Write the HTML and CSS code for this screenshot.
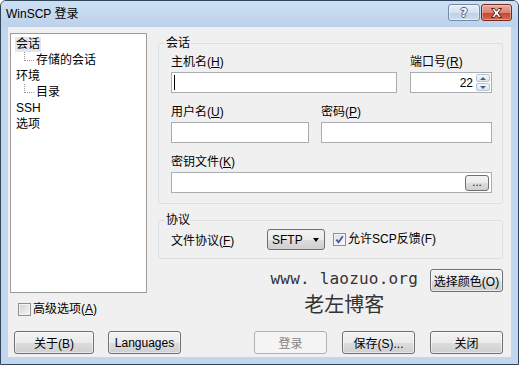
FILE: index.html
```html
<!DOCTYPE html>
<html>
<head>
<meta charset="utf-8">
<title>WinSCP 登录</title>
<link rel="stylesheet" href="styles.css">
</head>
<body>
<div class="window">
  <div class="titlebar">
    <span class="title">WinSCP 登录</span>
    <div class="caps">
      <div class="cap help"><span class="qmark">?</span></div>
      <div class="cap close">
        <svg width="13" height="10" viewBox="0 0 13 10"><path d="M1.5 0.5H4.3L6.5 3.2L8.7 0.5H11.5L8.2 5L11.5 9.5H8.7L6.5 6.8L4.3 9.5H1.5L4.8 5Z" fill="#fff" stroke="#4b2620" stroke-width="1" stroke-linejoin="round"/></svg>
      </div>
    </div>
  </div>
  <div class="client">
    <div class="main">
      <div class="leftcol">
        <div class="tree">
          <div class="node"><span class="sel">会话</span></div>
          <div class="node"><span class="conn"></span>存储的会话</div>
          <div class="node">环境</div>
          <div class="node"><span class="conn"></span>目录</div>
          <div class="node">SSH</div>
          <div class="node">选项</div>
        </div>
        <div class="check adv"><span class="box"></span><span>高级选项(<u>A</u>)</span></div>
      </div>
      <div class="rightcol">
        <fieldset class="group session">
          <legend>会话</legend>
          <div class="gbody sbody">
            <div class="row r1">
              <div class="field host">
                <div class="lbl">主机名(<u>H</u>)</div>
                <div class="input"><span class="caret"></span></div>
              </div>
              <div class="field port">
                <div class="lbl">端口号(<u>R</u>)</div>
                <div class="input num"><span>22</span>
                  <div class="spin"><div class="sb"><span class="up"></span></div><div class="sb"><span class="down"></span></div></div>
                </div>
              </div>
            </div>
            <div class="row r2">
              <div class="field user">
                <div class="lbl">用户名(<u>U</u>)</div>
                <div class="input"></div>
              </div>
              <div class="field pass">
                <div class="lbl">密码(<u>P</u>)</div>
                <div class="input"></div>
              </div>
            </div>
            <div class="row r3">
              <div class="field key">
                <div class="lbl">密钥文件(<u>K</u>)</div>
                <div class="input keyin"><div class="dots">...</div></div>
              </div>
            </div>
          </div>
        </fieldset>
        <fieldset class="group proto">
          <legend>协议</legend>
          <div class="gbody pbody">
            <span class="plbl">文件协议(<u>F</u>)</span>
            <div class="select"><span>SFTP</span><span class="arrow"></span></div>
            <div class="check scp"><span class="box checked"><svg width="9" height="9" viewBox="0 0 9 9"><path d="M1.3 4.6L3.6 7.2L7.8 1.3" fill="none" stroke="#4657a0" stroke-width="1.8"/></svg></span><span>允许SCP反馈(F)</span></div>
          </div>
        </fieldset>
        <div class="extra">
          <div class="watermark">
            <div class="wm1">www. laozuo.org</div>
            <div class="wm2">老左博客</div>
          </div>
          <div class="btn color">选择颜色(O)</div>
        </div>
      </div>
    </div>
    <div class="buttons">
      <div class="btn about">关于(B)</div>
      <div class="btn lang">Languages</div>
      <div class="btn login disabled">登录</div>
      <div class="btn save">保存(S)...</div>
      <div class="btn closeb">关闭</div>
    </div>
  </div>
</div>
</body>
</html>
```
FILE: styles.css
```css
* { box-sizing: border-box; }
html, body { margin: 0; padding: 0; background: #fff; }
body {
  font-family: "Liberation Sans", "Noto Sans CJK SC", sans-serif;
  font-size: 12px;
  color: #000;
}
u { text-decoration: underline; text-underline-offset: 1px; }

.window {
  width: 519px;
  height: 365px;
  border: 1px solid #33455b;
  border-radius: 6px 6px 0 0;
  background: #c2d6ee;
  display: flex;
  flex-direction: column;
  overflow: hidden;
}
.titlebar {
  height: 26px;
  flex: none;
  display: flex;
  justify-content: space-between;
  align-items: flex-start;
  padding: 0 6px 0 5px;
  background: linear-gradient(#cde0f3, #bcd2eb);
}
.title { line-height: 26px; font-size: 12px; }
.caps { display: flex; gap: 1px; margin-top: 3px; }
.cap {
  height: 17px;
  border-radius: 3px;
  display: flex;
  align-items: center;
  justify-content: center;
}
.help {
  width: 32px;
  border: 1px solid #7189ab;
  background: linear-gradient(#e7eef8 0, #d5e1f0 50%, #bfcfe5 51%, #cddcee 100%);
  box-shadow: inset 0 0 0 1px rgba(255,255,255,.5);
}
.qmark {
  font-family: "DejaVu Sans", sans-serif;
  font-weight: bold;
  font-size: 12px;
  line-height: 14px;
  color: #fff;
  text-shadow: 1px 0 0 #4b5c74, -1px 0 0 #4b5c74, 0 1px 0 #4b5c74, 0 -1px 0 #4b5c74;
}
.close {
  width: 31px;
  border: 1px solid #6d2b22;
  background: linear-gradient(#eba99b 0, #dd8170 50%, #c8432f 51%, #d5694f 100%);
  box-shadow: inset 0 0 0 1px rgba(255,255,255,.35);
}
.close svg { display: block; }

.client {
  flex: 1;
  margin: 0 7px 7px;
  background: #f0f0f0;
  display: flex;
  flex-direction: column;
  padding: 6px 8px 3px 2px;
}
.main { display: flex; gap: 11px; }

.leftcol { width: 137px; display: flex; flex-direction: column; }
.tree {
  height: 260px;
  border: 1px solid #9c9c9c;
  background: #fff;
  padding: 2px 0 0 5px;
}
.node {
  display: flex;
  align-items: flex-start;
  height: 16px;
  line-height: 16px;
  white-space: nowrap;
}
.sel { background: #e6e6e6; padding: 0 1px; margin-left: -1px; line-height: 15px; margin-top: 1px; }
.conn {
  width: 10px;
  height: 9px;
  margin-left: 8px;
  margin-right: 2px;
  border-left: 1px dotted #9a9a9a;
  border-bottom: 1px dotted #9a9a9a;
  flex: none;
}

.check { display: flex; align-items: center; gap: 2px; line-height: 13px; }
.adv { margin: 10px 0 0 8px; }
.box {
  width: 13px;
  height: 13px;
  flex: none;
  border: 1px solid #8e8f8f;
  background: linear-gradient(135deg, #cfcfcf, #f8f8f8);
  box-shadow: inset 0 0 0 1px #f4f4f4;
  display: flex;
  align-items: center;
  justify-content: center;
}
.box.checked { background: linear-gradient(135deg, #dcdcdc, #fbfbfb); }
.box svg { display: block; }

.rightcol { width: 345px; display: flex; flex-direction: column; }
.group {
  margin: 0;
  padding: 0;
  min-width: 0;
  border: 1px solid #d5dfe5;
  border-radius: 3px;
}
.group legend {
  padding: 0 1px;
  margin-left: 6px;
  line-height: 16px;
  font-size: 12px;
}
.session { margin-top: 2px; }
.sbody { padding: 3px 10px 10px 12px; display: flex; flex-direction: column; gap: 11px; }
.row { display: flex; }
.r1 { gap: 13px; }
.r2 { gap: 12px; }
.field { display: flex; flex-direction: column; gap: 2px; }
.lbl { line-height: 16px; height: 16px; white-space: nowrap; }
.host { width: 226px; }
.port { width: 82px; }
.user { width: 138px; }
.pass { width: 171px; }
.key { width: 321px; }
.input {
  height: 21px;
  border: 1px solid #abadb3;
  background: #fff;
  display: flex;
  align-items: center;
}
.caret { width: 1px; height: 15px; background: #000; margin-left: 2px; }
.num { justify-content: flex-end; }
.num > span { line-height: 16px; }
.spin { display: flex; flex-direction: column; gap: 1px; margin: 0 1px 0 3px; }
.sb {
  width: 14px;
  height: 8px;
  border: 1px solid #b7c4d6;
  border-radius: 2px;
  background: linear-gradient(#f5f8fc, #dbe4ef);
  display: flex;
  align-items: center;
  justify-content: center;
}
.up { width: 0; height: 0; border-left: 3px solid transparent; border-right: 3px solid transparent; border-bottom: 3px solid #4b5e80; }
.down { width: 0; height: 0; border-left: 3px solid transparent; border-right: 3px solid transparent; border-top: 3px solid #4b5e80; }
.keyin { justify-content: flex-end; }
.dots {
  width: 24px;
  height: 16px;
  margin-right: 2px;
  border: 1px solid #707070;
  border-radius: 3px;
  background: linear-gradient(#f2f2f2 0, #ebebeb 50%, #dddddd 51%, #cfcfcf 100%);
  font-size: 10px;
  line-height: 14px;
  text-align: center;
  font-family: "DejaVu Sans", sans-serif;
}

.proto { margin-top: 8px; }
.pbody { padding: 1px 10px 8px 12px; display: flex; align-items: center; }
.plbl { width: 96px; white-space: nowrap; }
.select {
  width: 58px;
  height: 21px;
  border: 1px solid #707070;
  border-radius: 3px;
  background: linear-gradient(#f2f2f2 0, #ebebeb 50%, #dddddd 51%, #cfcfcf 100%);
  display: flex;
  align-items: center;
  justify-content: space-between;
  padding: 0 5px 0 4px;
}
.arrow { width: 0; height: 0; border-left: 3.5px solid transparent; border-right: 3.5px solid transparent; border-top: 4px solid #000; }
.scp { margin-left: 8px; }

.extra { margin-top: 10px; display: flex; justify-content: flex-end; align-items: flex-start; gap: 12px; }
.watermark { display: flex; flex-direction: column; align-items: center; color: #333; }
.wm1 { font-family: "DejaVu Sans Mono", monospace; font-size: 16px; line-height: 20px; letter-spacing: 0.2px; white-space: pre; }
.wm2 { font-family: "Noto Sans CJK SC", sans-serif; font-size: 20px; line-height: 30px; }

.btn {
  height: 23px;
  border: 1px solid #707070;
  border-radius: 3px;
  background: linear-gradient(#f2f2f2 0, #ebebeb 50%, #dddddd 51%, #cfcfcf 100%);
  box-shadow: inset 0 0 0 1px rgba(255,255,255,.55);
  display: flex;
  align-items: center;
  justify-content: center;
  white-space: nowrap;
  flex: none;
}
.color { width: 73px; }
.buttons { margin-top: auto; display: flex; padding-left: 4px; }
.about { width: 80px; }
.lang { width: 73px; margin-left: 14px; }
.login { width: 73px; margin-left: 73px; }
.save { width: 73px; margin-left: 15px; }
.closeb { width: 73px; margin-left: 15px; }
.disabled { border-color: #adb2b5; background: #f4f4f4; color: #838383; box-shadow: none; }
```
